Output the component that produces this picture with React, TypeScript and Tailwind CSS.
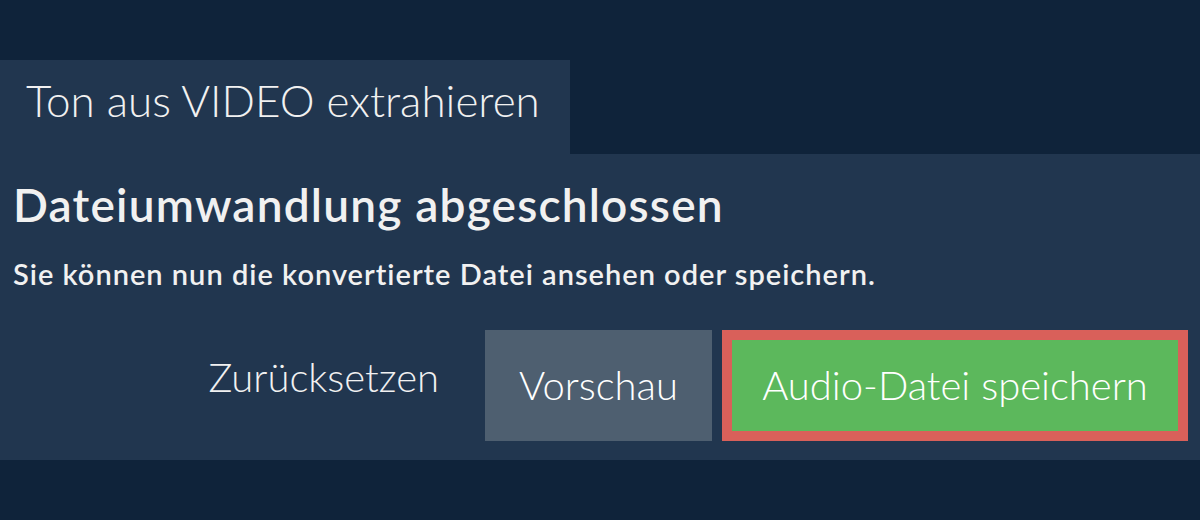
import React from "react";

export default function App() {
  return (
    <div
      className="h-[520px] w-[1200px] bg-[#0f233a] pt-[60px] text-[#f1f1f1]"
      style={{ fontFamily: "Lato, 'Noto Sans', sans-serif" }}
    >
      <div className="h-[94px] w-[570px] bg-[#21364f] pl-[26px] pt-[14px] text-[44px] font-light leading-[1.2]">
        Ton aus VIDEO extrahieren
      </div>
      <div className="h-[306px] bg-[#21364f] pl-[13px] pr-[12px] pt-[23px]">
        <h1 className="text-[46px] font-semibold leading-[1.2] tracking-[1.2px]">
          Dateiumwandlung abgeschlossen
        </h1>
        <p className="mt-[25px] text-[29px] font-semibold leading-[1.2] tracking-[1px]">
          Sie können nun die konvertierte Datei ansehen oder speichern.
        </p>
        <div className="mt-[38px] flex items-start justify-end">
          <button className="mr-[46px] mt-[23px] text-[40px] font-light leading-[1.2] text-[#f1f1f1]">
            Zurücksetzen
          </button>
          <button className="mr-[10px] flex h-[111px] w-[227px] items-center justify-center bg-[#4e5f70] text-[40px] font-light leading-[1.2] text-white">
            Vorschau
          </button>
          <button className="flex h-[111px] w-[466px] items-center justify-center border-[10px] border-[#d9605a] bg-[#5cb85c] text-[40px] font-light leading-[1.2] text-white">
            Audio-Datei speichern
          </button>
        </div>
      </div>
    </div>
  );
}
